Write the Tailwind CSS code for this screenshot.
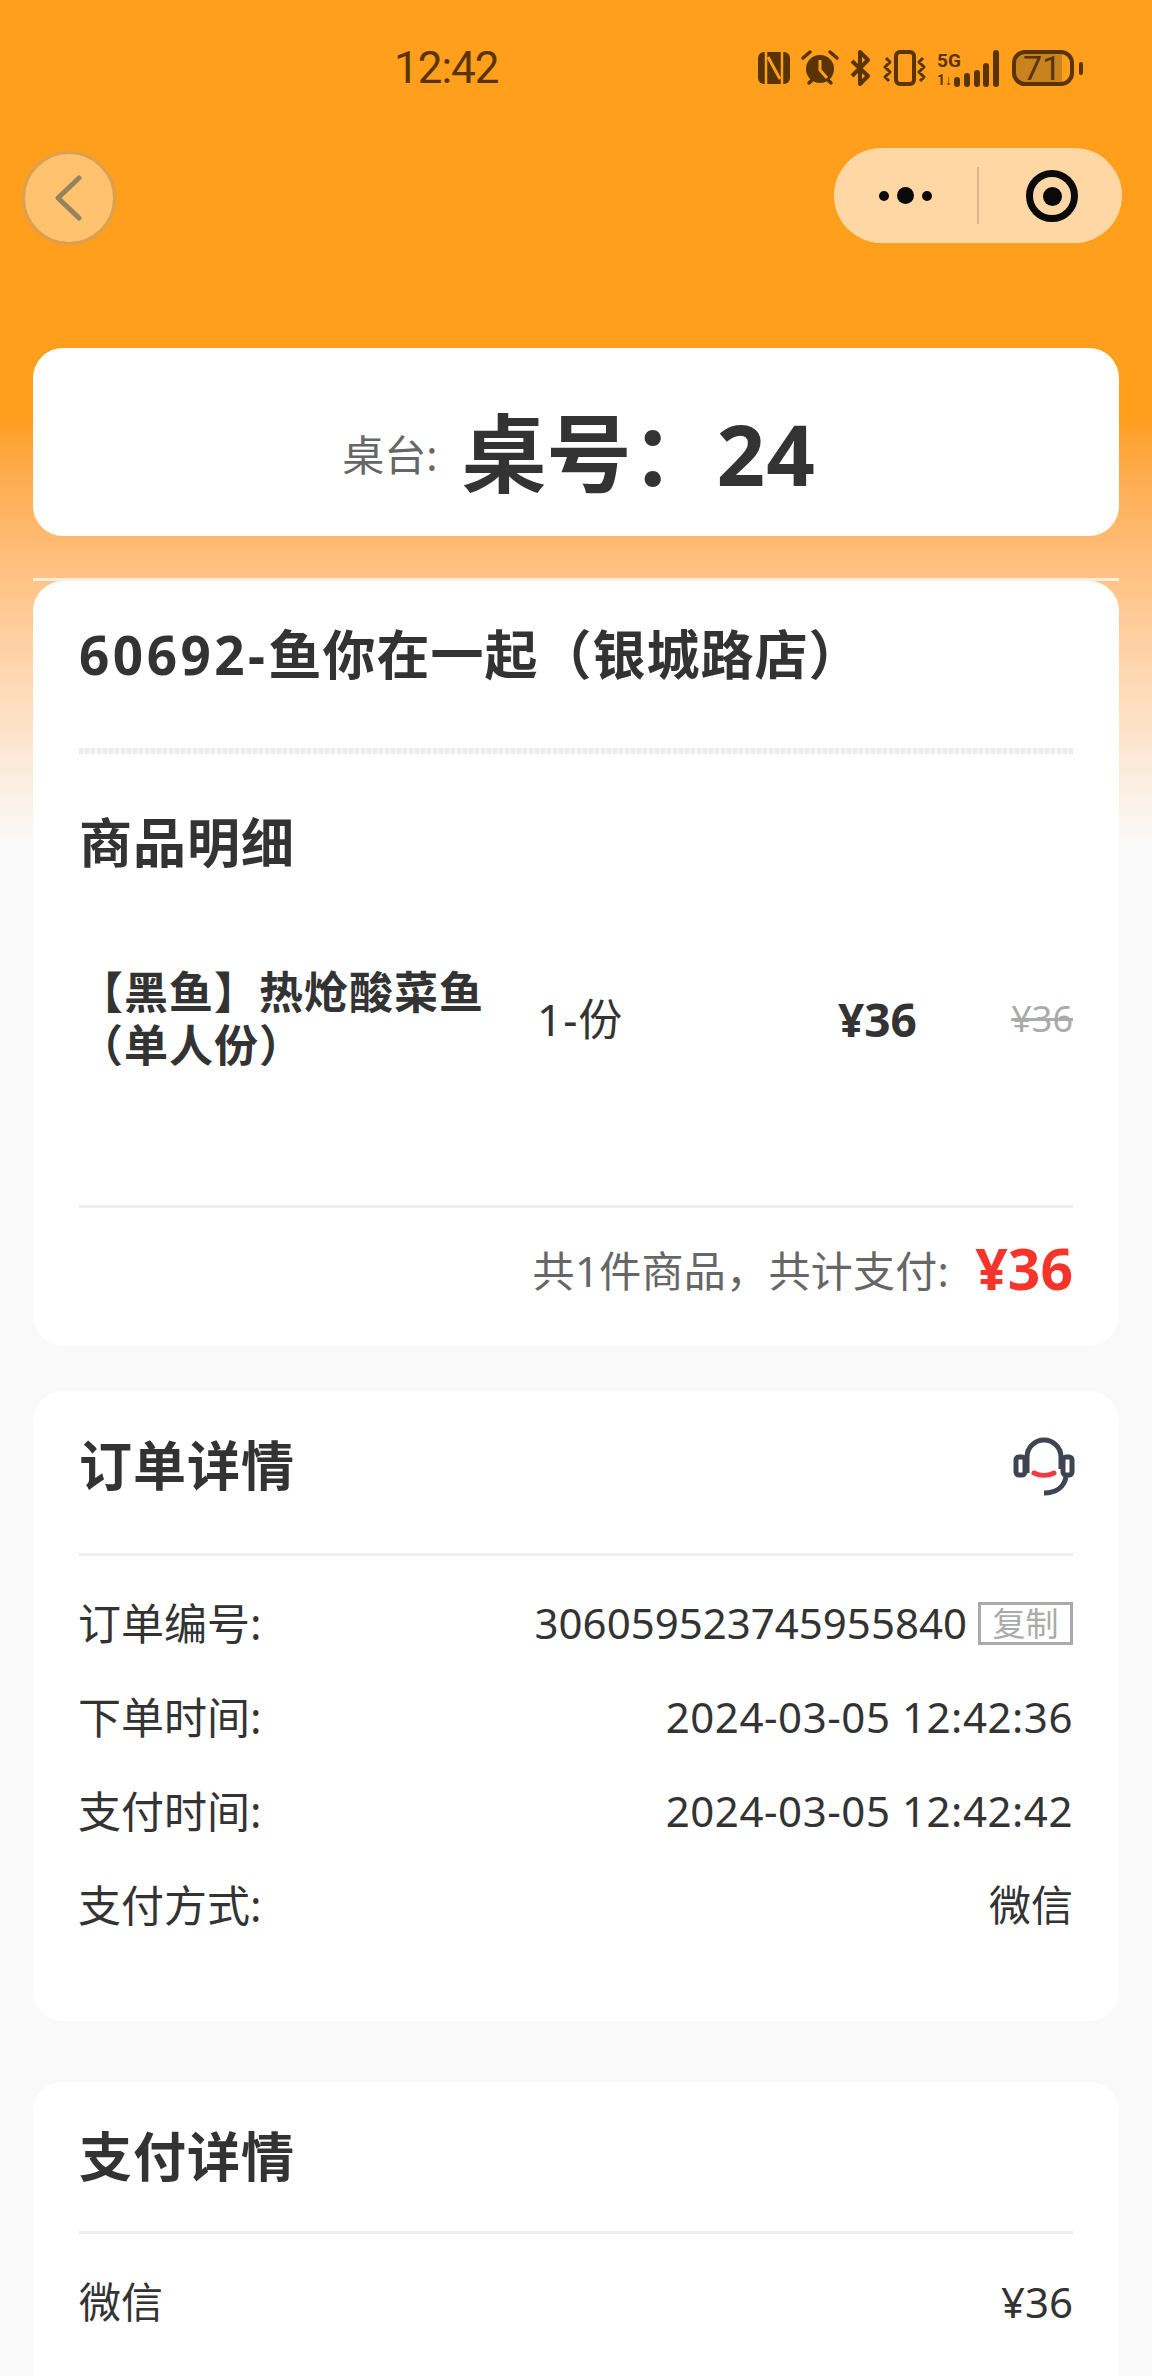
<!DOCTYPE html>
<html lang="zh">
<head>
<meta charset="utf-8">
<script src="https://cdn.jsdelivr.net/npm/@tailwindcss/browser@4"></script>
</head>
<body class="bg-[#f9f9f9]">
<div class="relative w-[1152px] h-[2376px] overflow-hidden bg-[#f9f9f9] text-[#333333] font-['Noto_Sans','Noto_Sans_CJK_SC',sans-serif]">
  <div class="absolute inset-x-0 top-0 h-[840px] bg-linear-to-b from-[#ff9f1c] from-[50%] to-[#f9f9f9]"></div>
  <div class="relative">
    <!-- status bar -->
    <div class="h-[136px] relative">
      <div class="absolute left-[394px] top-[39px] text-[44px] leading-[58px] text-[#5a3400] tracking-[-1px] font-['Roboto',sans-serif]">12:42</div>
      <svg class="absolute left-[750px] top-[44px]" width="340" height="48" viewBox="750 44 340 48" fill="none">
        <rect x="758" y="52" width="32" height="32" rx="6" fill="#5a3400"/>
        <path d="M766 52V84M782 52V84" stroke="#ff9f1c" stroke-width="2.5"/>
        <path d="M768 57L780 79" stroke="#ff9f1c" stroke-width="3"/>
        <circle cx="820" cy="69" r="14" fill="#5a3400"/>
        <path d="M820 60V70L827 78" stroke="#ff9f1c" stroke-width="3"/>
        <path d="M803 58L810 52M837 58L830 52M809 83L812 80M831 83L828 80" stroke="#5a3400" stroke-width="3.5" stroke-linecap="round"/>
        <path d="M852 61L868 76L860 84V52L868 60L852 76" stroke="#5a3400" stroke-width="4" stroke-linejoin="round"/>
        <rect x="896" y="52" width="18" height="32" rx="4" stroke="#5a3400" stroke-width="4"/>
        <path d="M886 58L890 62L885 67L890 72L885 77L889 81M923 58L919 62L924 67L919 72L924 77L920 81" stroke="#5a3400" stroke-width="3" stroke-linejoin="round"/>
        <text x="937" y="67" font-family="Roboto, sans-serif" font-size="19" font-weight="700" fill="#5a3400">5G</text>
        <text x="937" y="85" font-family="Roboto, sans-serif" font-size="14" font-weight="700" fill="#5a3400">1↓</text>
        <path d="M957 80V84M967 76V84M977 73V84M986 66V84M996 53V84" stroke="#5a3400" stroke-width="6" stroke-linecap="round"/>
        <path d="M1014 63A11 11 0 0 1 1025 52H1062V83H1025A11 11 0 0 1 1014 72Z" fill="#c8831e"/>
        <rect x="1014" y="52" width="58" height="32" rx="11" stroke="#5a3400" stroke-width="4"/>
        <text x="1042" y="80" text-anchor="middle" font-family="Roboto, sans-serif" font-size="34" fill="#5a3400">71</text>
        <rect x="1079" y="62" width="4" height="13" rx="2" fill="#5a3400"/>
      </svg>
    </div>
    <!-- mini program nav -->
    <div class="h-[212px] pl-[22px] pr-[30px] flex justify-between items-start">
      <div class="mt-[15px] w-[94px] h-[94px] rounded-full bg-[#ffc26f] border-[3px] border-[#dd9f50] flex items-center justify-center">
        <svg width="30" height="46" viewBox="0 0 30 46" fill="none"><path d="M25 3L4 23L25 43" stroke="#95825f" stroke-width="5" stroke-linecap="round" stroke-linejoin="round"/></svg>
      </div>
      <div class="mt-[12px] w-[288px] h-[95px] rounded-[48px] bg-[#ffd7a4] relative flex items-center">
        <div class="absolute left-[45px] top-[39px] flex items-center gap-[8px]">
          <span class="w-[10px] h-[10px] rounded-full bg-[#0a0a0a]"></span>
          <span class="w-[17px] h-[17px] rounded-full bg-[#0a0a0a]"></span>
          <span class="w-[10px] h-[10px] rounded-full bg-[#0a0a0a]"></span>
        </div>
        <div class="absolute left-[143px] top-[19px] w-[2px] h-[57px] bg-[#dab588]"></div>
        <div class="absolute left-[192px] top-[22px] w-[52px] h-[52px] rounded-full border-[7px] border-[#0a0a0a] flex items-center justify-center">
          <span class="w-[19px] h-[19px] rounded-full bg-[#0a0a0a]"></span>
        </div>
      </div>
    </div>
    <div class="px-[33px]">
      <!-- table card -->
      <div class="h-[188px] bg-white rounded-[30px] flex items-center justify-center pt-[22px] pl-[6px]">
        <span class="text-[42px] text-[#666666] mr-[24px] mt-[3px] leading-none">桌台:</span>
        <span class="text-[85px] font-bold leading-none">桌号：<span class="tracking-[1px]">24</span></span>
      </div>
      <div class="mt-[42px] h-[3px] bg-[#fdece0]"></div>
      <!-- goods card -->
      <div class="h-[765px] bg-white rounded-[30px] px-[46px]">
        <div class="h-[146px] flex items-center text-[53px] font-bold leading-none whitespace-nowrap"><span class="tracking-[3.5px]">60692-</span><span class="tracking-[1px]">鱼你在一起（银城路店）</span></div>
        <div class="mt-[21px] h-[6px] bg-[repeating-linear-gradient(90deg,#ececec_0,#ececec_4px,#f7f7f7_4px,#f7f7f7_6px)]"></div>
        <div class="h-[182px] pb-[6px] flex items-center text-[53px] font-bold leading-none tracking-[1px]">商品明细</div>
        <div class="h-[166px] flex items-center">
          <div class="w-[458px] text-[44px] leading-[53px] font-bold tracking-[1px] whitespace-nowrap">【黑鱼】热炝酸菜鱼<br>（单人份）</div>
          <div class="w-[301px] text-[44px] leading-none tracking-[1px]">1-份</div>
          <div class="text-[46px] font-bold leading-none">¥36</div>
          <div class="ml-auto text-[36px] text-[#aaaaaa] line-through leading-none">¥36</div>
        </div>
        <div class="mt-[103px] h-[3px] bg-[#eeeeee]"></div>
        <div class="h-[124px] flex items-center justify-end">
          <span class="text-[42px] text-[#666666] mr-[26px] mt-[2px] leading-none tracking-[0.3px]">共1件商品，共计支付:</span>
          <span class="text-[57px] font-bold text-[#f5352b] leading-none mb-[3px]">¥36</span>
        </div>
      </div>
      <!-- order card -->
      <div class="mt-[45px] h-[630px] bg-white rounded-[30px] px-[46px]">
        <div class="h-[162px] pb-[14px] flex items-center justify-between">
          <span class="text-[53px] font-bold leading-none tracking-[1px]">订单详情</span>
          <svg class="-mr-[3px] mt-[2px]" width="64" height="64" viewBox="1012 1435 64 64" fill="none">
            <path d="M1027 1474V1458A17 17 0 0 1 1061 1458V1470" stroke="#3e4452" stroke-width="5"/>
            <rect x="1016" y="1458" width="9" height="18" rx="3" stroke="#3e4452" stroke-width="5"/>
            <rect x="1063" y="1458" width="9" height="18" rx="3" stroke="#3e4452" stroke-width="5"/>
            <path d="M1066 1478C1064 1488 1056 1494 1044 1494" stroke="#3e4452" stroke-width="5"/>
            <path d="M1034 1474C1040 1477 1048 1477 1054 1474" stroke="#ef3a42" stroke-width="5" stroke-linecap="round"/>
          </svg>
        </div>
        <div class="h-[3px] bg-[#eeeeee]"></div>
        <div class="mt-[20px] text-[42px] leading-none">
          <div class="h-[94px] flex items-center justify-between"><span class="text-[43px] -ml-[1px]">订单编号:</span><span class="flex items-center">306059523745955840<span class="ml-[11px] w-[95px] h-[43px] border-[3px] border-[#aaaaaa] text-[#aaaaaa] text-[33px] flex items-center justify-center">复制</span></span></div>
          <div class="h-[94px] flex items-center justify-between"><span class="text-[43px] -ml-[1px]">下单时间:</span><span class="tracking-[0.55px]">2024-03-05 12:42:36</span></div>
          <div class="h-[94px] flex items-center justify-between"><span class="text-[43px] -ml-[1px]">支付时间:</span><span class="tracking-[0.55px]">2024-03-05 12:42:42</span></div>
          <div class="h-[94px] flex items-center justify-between"><span class="text-[43px] -ml-[1px]">支付方式:</span><span>微信</span></div>
        </div>
      </div>
      <!-- pay card -->
      <div class="mt-[61px] h-[320px] bg-white rounded-[30px] px-[46px]">
        <div class="h-[149px] flex items-center text-[53px] font-bold leading-none tracking-[1px]">支付详情</div>
        <div class="h-[3px] bg-[#eeeeee]"></div>
        <div class="h-[136px] flex items-center justify-between text-[42px] leading-none"><span>微信</span><span>¥36</span></div>
      </div>
    </div>
  </div>
</div>
</body>
</html>
